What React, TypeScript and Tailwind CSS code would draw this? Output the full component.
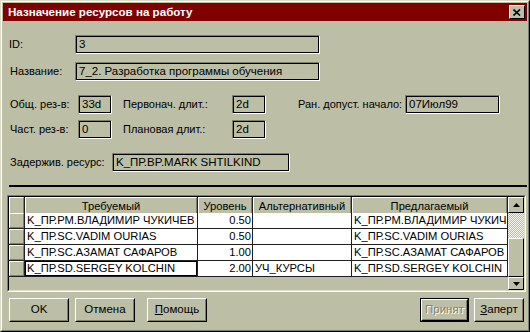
import React from 'react'

// Назначение ресурсов — старый диалог в стиле Win98

function Field({ w, text }: { w: string; text: string }) {
  return (
    <div className={`${w} h-[19px] border border-t-[#7d7f69] border-l-[#7d7f69] border-b-white border-r-white`}>
      <div className="h-full border border-black pl-[2px] text-[11.5px] leading-[15px] whitespace-nowrap overflow-hidden">
        {text}
      </div>
    </div>
  )
}

function Btn({ w, children, def, disabled }: { w: string; children: React.ReactNode; def?: boolean; disabled?: boolean }) {
  const inner = (
    <div className="h-full border border-t-white border-l-white border-b-black border-r-black">
      <div className="h-full flex items-center justify-center border border-t-[#bcbea5] border-l-[#bcbea5] border-b-[#7d7f69] border-r-[#7d7f69] text-[11.5px]">
        {disabled ? (
          <span className="text-[#82846f] [text-shadow:1px_1px_0_#fff]">{children}</span>
        ) : (
          children
        )}
      </div>
    </div>
  )
  return def ? <div className={`${w} h-[24px] border border-black`}>{inner}</div> : <div className={`${w} h-[24px]`}>{inner}</div>
}

function Arrow({ up }: { up?: boolean }) {
  return (
    <svg width="7" height="4" viewBox="0 0 7 4">
      <path d={up ? 'M0 4 L3.5 0 L7 4 Z' : 'M0 0 L3.5 4 L7 0 Z'} fill="#000" />
    </svg>
  )
}

const rows = [
  { req: 'K_ПР.РМ.ВЛАДИМИР ЧУКИЧЕВ', lvl: '0.50', alt: '', prop: 'K_ПР.РМ.ВЛАДИМИР ЧУКИЧЕВ' },
  { req: 'K_ПР.SC.VADIM OURIAS', lvl: '0.50', alt: '', prop: 'K_ПР.SC.VADIM OURIAS' },
  { req: 'K_ПР.SC.АЗАМАТ САФАРОВ', lvl: '1.00', alt: '', prop: 'K_ПР.SC.АЗАМАТ САФАРОВ' },
  { req: 'K_ПР.SD.SERGEY KOLCHIN', lvl: '2.00', alt: 'УЧ_КУРСЫ', prop: 'K_ПР.SD.SERGEY KOLCHIN' },
]

const headCell = 'h-full bg-[#bcbea5] border-r border-b border-[#202020]'
const headInner = 'h-full flex items-center justify-center border border-t-white border-l-white border-b-[#7d7f69] border-r-[#7d7f69] text-[11.2px] whitespace-nowrap overflow-hidden'
const cell = 'h-[16px] bg-white border-r border-b border-[#202020] text-[11.2px] leading-[15px] whitespace-nowrap overflow-hidden'

export default function App() {
  return (
    <div className="w-[530px] h-[332px] bg-[#bcbea5] font-['Liberation_Sans',Arial,sans-serif] text-black border border-t-[#dcdcc8] border-l-[#dcdcc8] border-b-black border-r-black">
      <div className="h-full flex flex-col border border-t-white border-l-white border-b-[#7d7f69] border-r-[#7d7f69] p-[1px]">
        {/* title */}
        <div className="h-[18px] bg-[#800000] flex items-center pl-[5px] pr-[2px]">
          <span className="flex-1 text-white font-bold text-[11.6px] whitespace-nowrap">Назначение ресурсов на работу</span>
          <div className="w-[16px] h-[14px] border border-t-white border-l-white border-b-black border-r-black bg-[#bcbea5] flex items-center justify-center">
            <svg width="8" height="7" viewBox="0 0 8 7">
              <path d="M0.5 0.5 L7 6.5 M7 0.5 L0.5 6.5" stroke="#000" strokeWidth="1.6" />
            </svg>
          </div>
        </div>

        {/* fields */}
        <div className="flex items-center pl-[6px] mt-[14px] text-[11px]">
          <span className="w-[66px]">ID:</span>
          <Field w="w-[245px]" text="3" />
        </div>
        <div className="flex items-center pl-[6px] mt-[8px] text-[11px]">
          <span className="w-[66px] pl-[1px]">Название:</span>
          <Field w="w-[245px]" text="7_2. Разработка программы обучения" />
        </div>
        <div className="flex items-center pl-[6px] mt-[14px] text-[11px] whitespace-nowrap">
          <span className="w-[69px] pl-[1px]">Общ. рез-в:</span>
          <Field w="w-[34px]" text="33d" />
          <span className="w-[109px] ml-[11px]">Первонач. длит.:</span>
          <Field w="w-[34px]" text="2d" />
          <span className="w-[107px] ml-[32px]">Ран. допуст. начало:</span>
          <Field w="w-[95px]" text="07Июл99" />
        </div>
        <div className="flex items-center pl-[6px] mt-[6px] text-[11px] whitespace-nowrap">
          <span className="w-[69px] pl-[1px]">Част. рез-в:</span>
          <Field w="w-[34px]" text="0" />
          <span className="w-[109px] ml-[11px]">Плановая длит.:</span>
          <Field w="w-[34px]" text="2d" />
        </div>
        <div className="flex items-center pl-[6px] mt-[14px] text-[11px] whitespace-nowrap">
          <span className="w-[103px] pl-[1px]">Задержив. ресурс:</span>
          <Field w="w-[178px]" text="K_ПР.BP.MARK SHTILKIND" />
        </div>

        <div className="ml-[6px] mt-[13px] h-[2px] bg-black" />

        {/* grid */}
        <div className="ml-[4px] mt-[8px] w-[519px] h-[97px] border border-t-[#7d7f69] border-l-[#7d7f69] border-b-white border-r-white">
          <div className="h-full flex border border-t-black border-l-black border-b-[#dcdcc8] border-r-[#dcdcc8]">
            <div className="flex-1 flex flex-col">
              <div className="grid grid-cols-[16px_173px_55px_99px_156px] h-[16px]">
                <div className={headCell}><div className={headInner} /></div>
                <div className={headCell}><div className={headInner}>Требуемый</div></div>
                <div className={headCell}><div className={headInner}>Уровень</div></div>
                <div className={headCell}><div className={headInner}>Альтернативный</div></div>
                <div className={headCell}><div className={headInner}>Предлагаемый</div></div>
              </div>
              {rows.map((r, i) => (
                <div key={i} className="grid grid-cols-[16px_173px_55px_99px_156px]">
                  <div className="h-[16px] bg-[#bcbea5] border-r border-b border-[#202020]">
                    <div className="h-full border border-t-white border-l-white border-b-[#7d7f69] border-r-[#7d7f69]" />
                  </div>
                  <div className={`${cell} pl-[2px] ${i === 3 ? 'shadow-[inset_0_0_0_1px_#000]' : ''}`}>{r.req}</div>
                  <div className={`${cell} text-right pr-[1px]`}>{r.lvl}</div>
                  <div className={`${cell} pl-[2px]`}>{r.alt}</div>
                  <div className={`${cell} pl-[2px]`}>{r.prop}</div>
                </div>
              ))}
              <div className="flex-1" />
            </div>
            <div className="w-[16px] flex flex-col">
              <div className="h-[16px] border border-t-white border-l-white border-b-black border-r-black flex items-center justify-center">
                <Arrow up />
              </div>
              <div className="h-[25px] bg-[repeating-conic-gradient(#f4f4ea_0%_25%,#bcbea5_0%_50%)] bg-[length:2px_2px]" />
              <div className="flex-1 border border-t-white border-l-white border-b-black border-r-black" />
              <div className="h-[13px] border border-t-white border-l-white border-b-black border-r-black flex items-center justify-center">
                <Arrow />
              </div>
            </div>
          </div>
        </div>

        {/* buttons */}
        <div className="flex items-center pl-[6px] pr-[3px] mt-[6px]">
          <Btn w="w-[60px]">OK</Btn>
          <div className="ml-[6px]"><Btn w="w-[60px]">Отмена</Btn></div>
          <div className="ml-[12px]"><Btn w="w-[60px]"><span><span className="underline">П</span>омощь</span></Btn></div>
          <div className="flex-1" />
          <Btn w="w-[49px]" def disabled>Принят</Btn>
          <div className="ml-[5px]"><Btn w="w-[50px]"><span><span className="underline">З</span>аперт</span></Btn></div>
        </div>
      </div>
    </div>
  )
}
